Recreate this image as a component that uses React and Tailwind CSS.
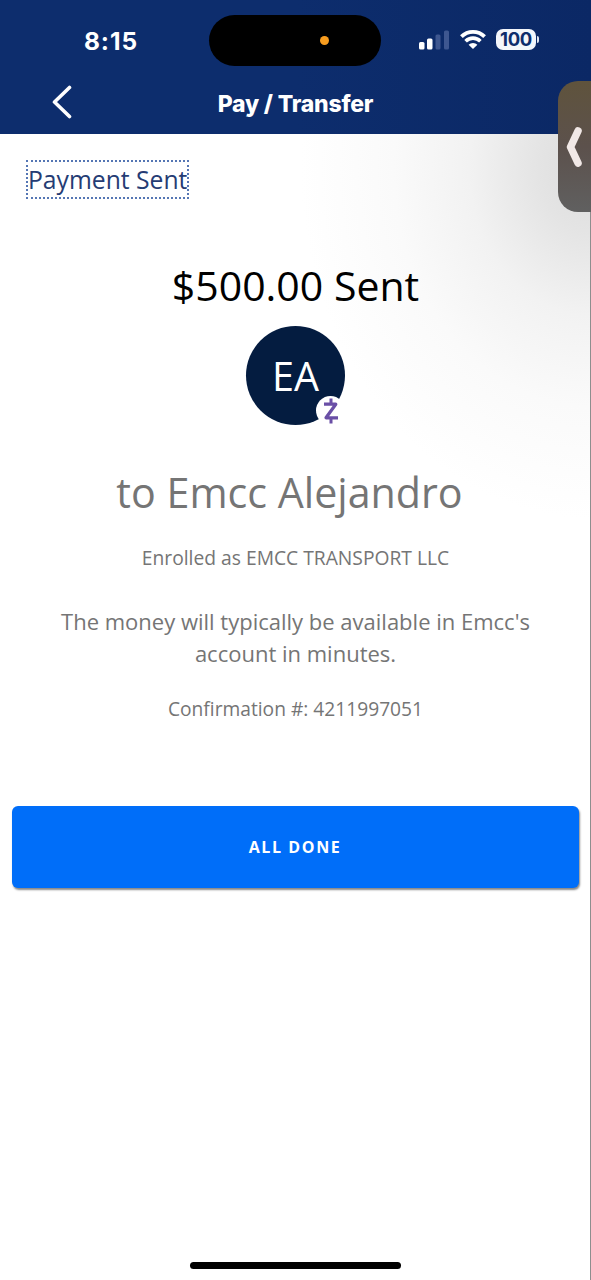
function StatusBar() {
    return (
        <div className="relative flex h-[80px] items-start">
            <span className="ml-[84px] mt-[25px] font-['Inter'] text-[24.5px] leading-[32px] font-bold tracking-[0.9px]">
                8:15
            </span>

            {/* Dynamic island */}
            <div className="absolute left-[209px] top-[15px] h-[51px] w-[172px] rounded-full bg-black">
                <div className="absolute left-[111px] top-[21px] h-[9px] w-[9px] rounded-full bg-[#f89d1f]"></div>
            </div>

            <div className="ml-auto mr-[52px] mt-[29px] flex items-start">
                {/* Signal */}
                <svg width="31" height="20" viewBox="0 0 31 20" className="mt-[1px]">
                    <rect x="0" y="12" width="5.5" height="7.5" rx="1.5" fill="#fff" />
                    <rect x="8" y="8.5" width="5.5" height="11" rx="1.5" fill="#fff" />
                    <rect x="16.5" y="4.5" width="5" height="15" rx="1.5" fill="#3e5790" />
                    <rect x="25" y="0.5" width="5" height="19" rx="1.5" fill="#3e5790" />
                </svg>
                {/* Wifi */}
                <svg width="26" height="20" viewBox="0 0 26 20" className="ml-[10px]">
                    <path d="M1.4 7.6A16.4 16.4 0 0 1 24.6 7.6" fill="none" stroke="#fff" strokeWidth="3.8" />
                    <path d="M5.6 12.2A10.4 10.4 0 0 1 20.4 12.2" fill="none" stroke="#fff" strokeWidth="3.6" />
                    <path d="M13 20L8.6 15.7A6.4 6.4 0 0 1 17.4 15.7Z" fill="#fff" />
                </svg>
                {/* Battery */}
                <div className="ml-[10px] flex items-center">
                    <div className="flex h-[21px] w-[40px] items-center justify-center rounded-[7px] bg-[#f3f6fb] font-['Inter'] text-[18.5px] leading-[21px] font-bold tracking-[-0.3px] text-[#0d2c6c]">
                        100
                    </div>
                    <div className="ml-[1px] h-[7px] w-[2px] rounded-r-full bg-[#dfe5f0]"></div>
                </div>
            </div>
        </div>
    );
}

function Header() {
    return (
        <header className="h-[134px] bg-linear-to-r from-[#0d2d6d] from-50% to-[#0b2865] text-white">
            <StatusBar />
            <div className="grid h-[48px] grid-cols-[80px_1fr_80px] items-center">
                <svg width="22" height="34" viewBox="0 0 22 34" className="ml-[51px] mt-[-4px]">
                    <path d="M18.5 2.5L3.5 17L18.5 31.5" fill="none" stroke="#fff" strokeWidth="3.6" strokeLinecap="round" strokeLinejoin="round" />
                </svg>
                <h1 className="text-center font-['Inter'] text-[23px] leading-[28px] font-extrabold tracking-[-0.2px]">Pay / Transfer</h1>
            </div>
        </header>
    );
}

function Avatar() {
    return (
        <div className="relative mt-[13px] flex h-[99px] w-[99px] items-center justify-center rounded-full bg-[#041c40] pt-[2px] text-[39.5px] text-white">
            EA
            <div className="absolute left-[70px] top-[70px] flex h-[29px] w-[29px] items-center justify-center rounded-full bg-white">
                <svg width="16" height="26" viewBox="0 0 16 26">
                    <path d="M1 6.2H12.8L3 19.8H15" fill="none" stroke="#6a4fa6" strokeWidth="3.2" strokeLinejoin="round" />
                    <path d="M8 0.5V6M8 20V25.5" stroke="#6a4fa6" strokeWidth="3" />
                </svg>
            </div>
        </div>
    );
}

export default function App() {
    return (
        <div className="relative flex h-[1280px] w-[591px] flex-col overflow-hidden bg-white font-['Open_Sans',sans-serif]">
            <Header />

            <main className="flex flex-1 flex-col items-center bg-[radial-gradient(290px_350px_at_100%_3%,#dcdcdc_0%,#e4e4e4_18%,#f2f2f2_42%,#fafafa_68%,#ffffff_100%)]">
                <h2 className="ml-[26px] mt-[26px] h-[39px] self-start border-2 border-dotted border-[#5576b4] text-[24.7px] leading-[36px] text-[#253c74]">
                    Payment Sent
                </h2>

                <p className="mt-[58px] text-[41px] leading-[56px] text-black">$500.00 Sent</p>
                <Avatar />
                <p className="mr-[12px] mt-[39px] text-[41.2px] leading-[56px] text-[#757575]">to Emcc Alejandro</p>
                <p className="mt-[24px] text-[19.25px] leading-[28px] text-[#757575]">Enrolled as EMCC TRANSPORT LLC</p>
                <p className="mt-[33px] text-center text-[22px] leading-[32px] text-[#757575]">
                    The money will typically be available in Emcc&apos;s
                    <br />
                    account in minutes.
                </p>
                <p className="mt-[26px] text-[19.2px] leading-[28px] text-[#757575]">Confirmation #: 4211997051</p>

                <button className="mr-[1px] mt-[83px] h-[82px] w-[567px] rounded-[6px] bg-[#006ef9] text-[16px] font-bold tracking-[1.6px] text-white shadow-[1px_2px_2px_#888888]">
                    ALL DONE
                </button>

                {/* Home indicator */}
                <div className="mb-[11px] mt-auto h-[7px] w-[211px] rounded-full bg-black"></div>
            </main>

            {/* Side drawer handle */}
            <div className="absolute right-0 top-[81px] flex h-[131px] w-[33px] items-center rounded-l-[20px] bg-linear-to-b from-[#5f533c] via-[#5c514c] to-[#606060] pl-[8px]">
                <svg width="16" height="40" viewBox="0 0 16 40">
                    <path d="M12 4L4.5 20L12 36" fill="none" stroke="#f1e8e6" strokeWidth="7.5" strokeLinecap="round" strokeLinejoin="round" />
                </svg>
            </div>
            <div className="absolute right-0 top-[212px] h-[1068px] w-px bg-[#8e8e8e]"></div>
        </div>
    );
}
